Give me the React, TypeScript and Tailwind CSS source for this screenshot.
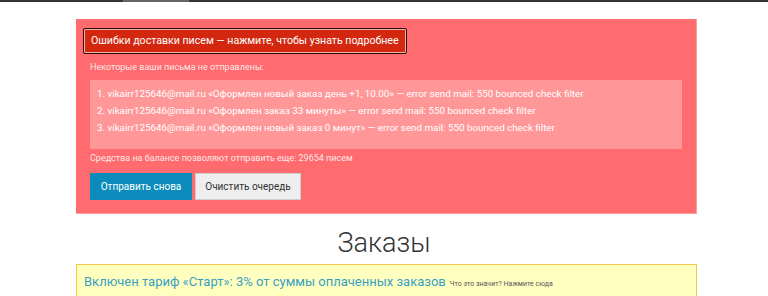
export default function App() {
  const errors = [
    "vikairr125646@mail.ru «Оформлен новый заказ день +1, 10.00» — error send mail: 550 bounced check filter",
    "vikairr125646@mail.ru «Оформлен заказ 33 минуты» — error send mail: 550 bounced check filter",
    "vikairr125646@mail.ru «Оформлен новый заказ 0 минут» — error send mail: 550 bounced check filter",
  ]

  return (
    <div className="h-[296px] w-[768px] overflow-hidden bg-white font-['Roboto',sans-serif]">
      <div className="flex h-[2px] bg-[#333]">
        <div className="ml-[123px] w-[66px] bg-[#666]" />
      </div>

      <div className="ml-[76px] mt-[17px] w-[621px] border-b border-r border-[#ff9d9d] bg-[#ff6b6e] px-[7px] pb-[13px] pt-[8px]">
        <button className="h-[26px] rounded-[2px] border border-[#2a0a05] bg-[#d3280f] px-[7px] text-[10.6px] text-white shadow-[inset_0_0_0_1px_#f5b5a8]">
          Ошибки доставки писем — нажмите, чтобы узнать подробнее
        </button>

        <div className="px-[7px]">
          <p className="mt-[6px] text-[9px] leading-[14px] text-[#fde8e8]">Некоторые ваши письма не отправлены:</p>

          <ol className="mt-[6px] bg-[#ff9799] px-[7px] pb-[13px] pt-[5px] text-[9.8px] leading-[17px] text-white">
            {errors.map((e, i) => (
              <li key={i}>
                {i + 1}. {e}
              </li>
            ))}
          </ol>

          <p className="mt-[2px] text-[9px] leading-[14px] text-[#fde8e8]">
            Средства на балансе позволяют отправить еще: 29654 писем
          </p>

          <div className="mt-[8px] flex gap-[3px]">
            <button className="h-[27px] w-[102px] bg-[#0b8cbc] text-[10px] text-white">Отправить снова</button>
            <button className="h-[27px] w-[106px] border border-[#ccc] bg-[#eeeeee] text-[10px] text-[#333]">
              Очистить очередь
            </button>
          </div>
        </div>
      </div>

      <h1 className="mt-[11px] text-center text-[27px] font-light leading-[36px] text-[#333]">Заказы</h1>

      <div className="ml-[76px] mt-[3px] w-[621px] border border-[#f5c84c] bg-[#ffffc0] px-[7px] pt-[6px] pb-[10px] leading-[20px]">
        <span className="text-[13px] text-[#38a0c4]">Включен тариф «Старт»: 3% от суммы оплаченных заказов</span>
        <span className="ml-[4px] text-[7px] text-[#555]">Что это значит? Нажмите сюда</span>
      </div>
    </div>
  )
}
